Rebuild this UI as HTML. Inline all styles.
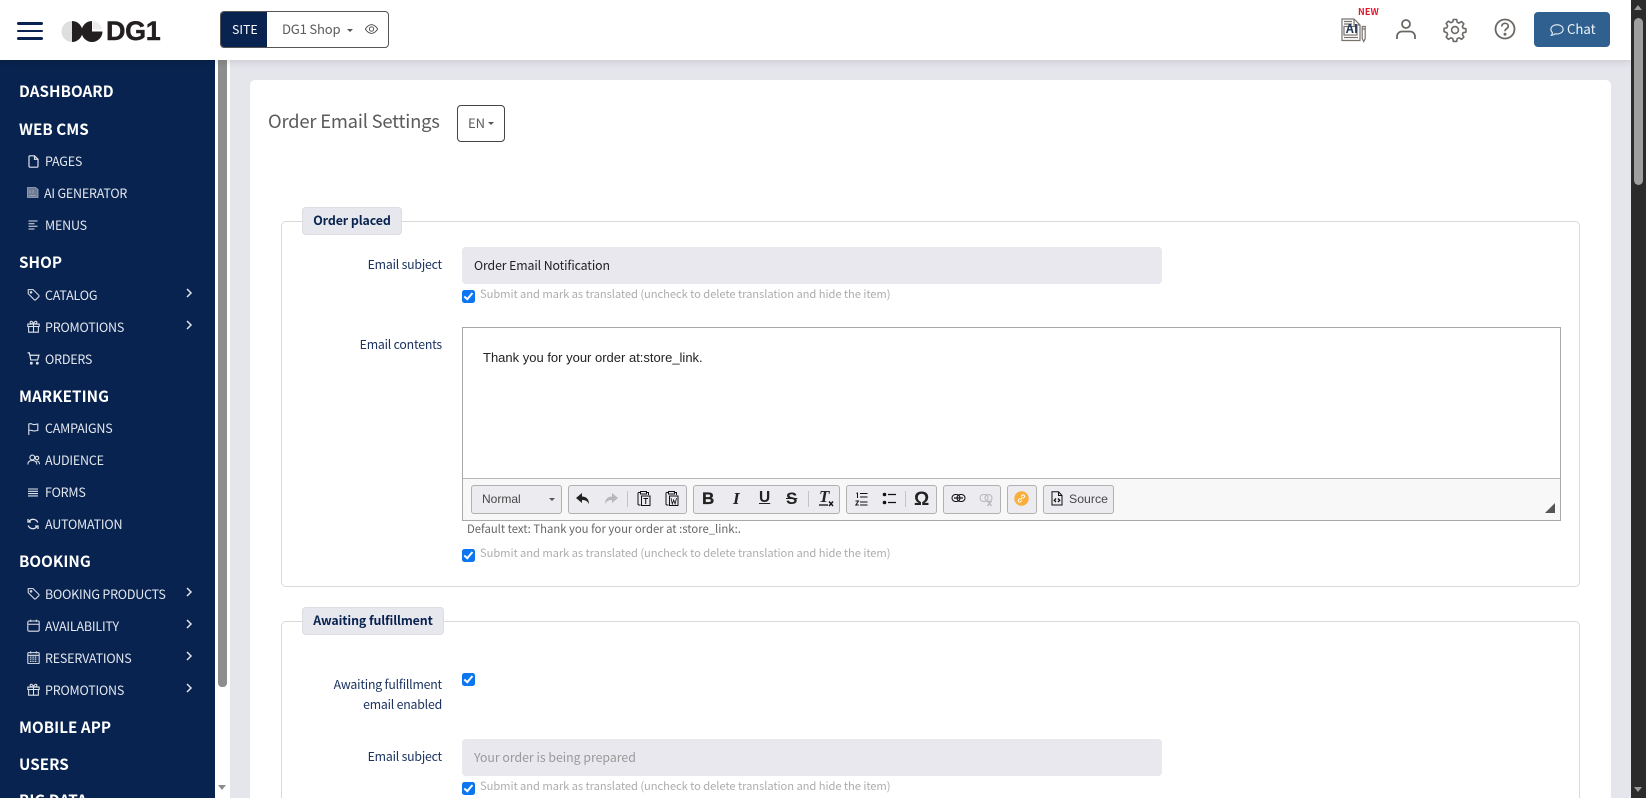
<!DOCTYPE html>
<html lang="en"><head><meta charset="utf-8"><title>Order Email Settings</title>
<style>
html,body{margin:0;padding:0;width:1646px;height:798px;overflow:hidden;background:#e5e5ec}
body{position:relative;font-family:"Noto Sans CJK JP","Liberation Sans",sans-serif}
.a{position:absolute}
.t{position:absolute;white-space:nowrap;line-height:20px;height:20px}
svg{position:absolute;overflow:visible;fill:none;stroke:currentColor}
#hdr{left:0;top:0;width:1631px;height:60px;background:#fff;box-shadow:0 2px 7px rgba(0,0,0,.12);z-index:3}
#side{left:0;top:0;width:215px;height:798px;color:#fff;z-index:2}
#strack{left:215px;top:60px;width:15px;height:738px;background:#fff;z-index:2}
#card{left:250px;top:80px;width:1361px;height:730px;background:#fff;border-radius:5px}
.h{left:19px;font-size:15.2px;font-weight:700;color:#fff;letter-spacing:.05px}
.s{left:45px;font-size:12.5px;color:#e4e8ef;letter-spacing:-.2px}
.i{color:#dfe4ec;stroke-width:1.3}
.fs{left:281px;width:1297px;border:1px solid #d9d9d9;border-radius:5px;box-sizing:content-box}
.lg{background:#e7e7ee;border:1px solid #dcdce3;border-radius:4px;height:26px;line-height:25px;font-size:12.4px;font-weight:700;color:#08234f;text-align:center;box-sizing:content-box;letter-spacing:-.1px}
.lb{font-size:12.3px;color:#1c3360;text-align:right;right:1204px;letter-spacing:-.2px}
.inp{left:462px;width:700px;height:37px;background:#e8e8ee;border-radius:4px}
.cb{left:462px;width:13px;height:13px;background:#0b76ef;border-radius:2.5px}
.cb:after{content:"";position:absolute;left:4.4px;top:1.4px;width:3px;height:6.8px;border:solid #fff;border-width:0 2px 2px 0;transform:rotate(40deg)}
.sm{left:480px;font-size:11.2px;color:#adadad;letter-spacing:-.07px}
.g{top:485px;height:27px;background:#ebebf0;border:1px solid #b1b1b1;border-radius:3px}
.ck{font-family:"Liberation Sans",sans-serif}
.sep{top:491px;width:1px;height:16px;background:#c4c4c4}
.tb{color:#111;stroke-width:1}
</style></head><body>
<svg width="0" height="0" style="position:absolute"><defs>
<symbol id="tag" viewBox="0 0 16 16"><path d="M1.500 2h6l7 7a1.200 1.200 0 0 1 0 1.700l-3.800 3.800a1.200 1.200 0 0 1-1.700 0l-7.500-7.500V2.500z"/><circle cx="5" cy="5.400" r=".9"/></symbol>
<symbol id="gift" viewBox="0 0 16 16"><path d="M1 5h14v3H1zM2 8v7h12V8M8 5v10M8 5C6 5 3.800 4.400 3.800 2.800S6.800 .5 8 5c1.200-4.500 4.200-3.800 4.200-2.200S10 5 8 5z"/></symbol>
<symbol id="cal" viewBox="0 0 16 16"><rect x="1" y="2.500" width="14" height="12.500" rx="1.500"/><path d="M1 6.500h14M4.500 .8V3.500M11.500 .8V3.500"/></symbol>
<symbol id="calw" viewBox="0 0 16 16"><rect x="1" y="2" width="14" height="13.500" rx="1"/><path d="M1 5.300h14M4.500 .5V3M11.500 .5V3"/><path d="M3.500 7.500h9M3.500 10h9M3.500 12.800h9" stroke-width="1.600" stroke-dasharray="1.300 .8"/></symbol>
<symbol id="chev" viewBox="0 0 8 12"><path d="M2 2l4 4-4 4" stroke-width="1.500"/></symbol>
</defs></svg>

<div id="hdr" class="a">
 <div class="a" style="left:17px;top:22px;width:26px;height:2.500px;background:#08234f;border-radius:2px"></div>
 <div class="a" style="left:17px;top:29.500px;width:26px;height:2.500px;background:#08234f;border-radius:2px"></div>
 <div class="a" style="left:17px;top:37px;width:26px;height:2.500px;background:#08234f;border-radius:2px"></div>
 <svg style="left:61px;top:21px;stroke:none" width="44" height="21" viewBox="0 0 44 21"><path d="M11 0A10.500 10.500 0 0 0 11 21z" fill="#dedede"/><path d="M11 0A10.500 10.500 0 0 1 11 21z" fill="#231f20"/><path d="M31 0A10.500 10.500 0 0 0 31 21 10.500 10.500 0 0 0 41.500 10.500H31z" fill="#231f20"/><path d="M31.500 0a10 10 0 0 1 9.500 8.500h-9.500z" fill="#ececec"/></svg>
 <div class="t ck" style="left:106px;top:18px;height:28px;line-height:27px;font-size:27px;font-weight:700;color:#231f20;letter-spacing:-.4px;-webkit-text-stroke:.4px #231f20">DG1</div>
 <div class="a" style="left:220px;top:11px;width:167px;height:35px;border:1px solid #555;border-radius:4px;background:#fff;overflow:hidden"><div class="a" style="left:0;top:0;width:46px;height:35px;background:#08234f"></div></div>
 <div class="t" style="left:232px;top:19px;font-size:12.400px;color:#fff">SITE</div>
 <div class="t" style="left:282px;top:19px;font-size:13.100px;color:#5c5c5c;letter-spacing:-.2px">DG1 Shop</div>
 <div class="a" style="left:347px;top:29px;border:3.500px solid transparent;border-top-color:#555;border-bottom:0"></div>
 <svg style="left:364px;top:22px;color:#444" width="15" height="14" viewBox="0 0 16 16"><path d="M1 8s2.700-5 7-5 7 5 7 5-2.700 5-7 5-7-5-7-5z"/><circle cx="8" cy="8" r="2.500"/></svg>
 <svg style="left:1341px;top:18px;color:#77716c" width="25" height="24" viewBox="0 0 25 24" stroke-width="1.200"><path d="M1 1h12l6 6v15.500H1zM13 1v6h6"/><path d="M3 3.500h8M3 6h8"/><rect x="3" y="8.500" width="13" height="8.500"/><path d="M21.200 8.500h3v12l-1.500 3-1.500-3zM21.200 11h3"/><path d="M3 19.500h14"/></svg>
 <div class="t" style="left:1346px;top:19px;font-size:12px;font-weight:700;color:#24385a;letter-spacing:.3px">AI</div>
 <div class="t" style="left:1358px;top:2px;font-size:9px;font-weight:700;color:#e3182d;letter-spacing:.1px">NEW</div>
 <svg style="left:1395px;top:18px;color:#6b6763" width="22" height="22" viewBox="0 0 22 22" stroke-width="1.800"><circle cx="11" cy="6" r="4"/><path d="M2 21v-2.500c0-3 2.500-5 5-5h8c2.500 0 5 2 5 5V21"/></svg>
 <svg style="left:1443px;top:18px;color:#6b6763" width="24" height="24" viewBox="0 0 16 16" stroke-width="1.050"><circle cx="8" cy="8" r="2.300"/><path d="M6.900 1h2.200l.4 1.900 1.200.5 1.700-1 1.500 1.500-1 1.700.5 1.200 1.900.4v2.200l-1.900.4-.5 1.200 1 1.700-1.500 1.500-1.700-1-1.200.5-.4 1.900H6.900l-.4-1.900-1.200-.5-1.700 1-1.500-1.500 1-1.700-.5-1.200L.7 9.100V6.900l1.900-.4.500-1.200-1-1.700 1.500-1.500 1.700 1 1.200-.5z" stroke-linejoin="round"/></svg>
 <svg style="left:1494px;top:18px;color:#6b6763" width="22" height="22" viewBox="0 0 22 22" stroke-width="1.800"><circle cx="11" cy="11" r="9.500"/><path d="M7.800 8.500c0-2 1.500-3.200 3.300-3.200s3.200 1.200 3.200 2.900c0 2.300-3.300 2.400-3.300 5" stroke-width="1.700"/><circle cx="11" cy="16.300" r=".6" fill="currentColor"/></svg>
 <div class="a" style="left:1534px;top:12px;width:76px;height:35px;background:#30608f;border-radius:4px"></div>
 <svg style="left:1550px;top:23px;color:#e3ebf3" width="14" height="14" viewBox="0 0 16 16" stroke-width="1.300"><path d="M8 2c3.900 0 7 2.300 7 5.300s-3.100 5.300-7 5.300c-.800 0-1.500-.1-2.200-.3C4.800 13.300 3 14 1.500 14c.700-.8 1.200-1.800 1.300-2.900C1.700 10.100 1 8.800 1 7.300 1 4.300 4.100 2 8 2z"/></svg>
 <div class="t" style="left:1567px;top:19px;font-size:13.200px;color:#eef3f8">Chat</div>
</div>

<div id="side" class="a">
 <div class="a" style="left:0;top:60px;width:215px;height:738px;background:#08234f"></div>
 <div class="t h" style="top:81px">DASHBOARD</div>
 <div class="t h" style="top:119px">WEB CMS</div>
 <svg class="i" style="left:27px;top:155px" width="13" height="13" viewBox="0 0 13 13"><path d="M2.500 .8h5l3.500 3.500V11a1 1 0 0 1-1 1.200h-7a1 1 0 0 1-1-1.200V2a1 1 0 0 1 1-1.200zM7.500 .8v3.500H11" stroke-width="1.200"/></svg>
 <div class="t s" style="top:151px">PAGES</div>
 <svg class="i" style="left:27px;top:187px;color:#a3acbc;stroke-width:.8" width="12" height="11" viewBox="0 0 12 11"><path d="M.5.500h8l2.500 2V10.500H.5z" fill="#6e7b94"/><path d="M2 8.500h7M3 3v3.500M6 3v3.500"/></svg>
 <div class="t s" style="left:44px;top:183px">AI GENERATOR</div>
 <svg class="i" style="left:28px;top:220px;stroke-width:1" width="11" height="10" viewBox="0 0 11 10"><path d="M.5 1h9M.5 3.700h6M.500 6.300h9M.5 9h6"/></svg>
 <div class="t s" style="top:215px">MENUS</div>
 <div class="t h" style="top:252px">SHOP</div>
 <svg class="i" style="left:27px;top:288px" width="13" height="13"><use href="#tag"/></svg>
 <div class="t s" style="top:285px">CATALOG</div>
 <svg class="i" style="left:185px;top:287px" width="8" height="12"><use href="#chev"/></svg>
 <svg class="i" style="left:27px;top:320px" width="13" height="13"><use href="#gift"/></svg>
 <div class="t s" style="top:317px">PROMOTIONS</div>
 <svg class="i" style="left:185px;top:319px" width="8" height="12"><use href="#chev"/></svg>
 <svg class="i" style="left:27px;top:352px;stroke-width:1.100" width="13" height="13" viewBox="0 0 12 12"><path d="M.5.800h1.700l1.300 6.500h6.300L11 3H2.800"/><circle cx="4" cy="10.300" r=".8" fill="currentColor"/><circle cx="9.500" cy="10.300" r=".8" fill="currentColor"/></svg>
 <div class="t s" style="top:349px">ORDERS</div>
 <div class="t h" style="top:386px">MARKETING</div>
 <svg class="i" style="left:28px;top:423px" width="11" height="12" viewBox="0 0 11 12"><path d="M.8 12V1c3-1 3.500.6 5 .6 1.300 0 2.700-.6 4-.6v6.500c-1.300 0-2.700.5-4 .5-1.500 0-2-1.400-5-.5" stroke-width="1.100"/></svg>
 <div class="t s" style="top:418px">CAMPAIGNS</div>
 <svg class="i" style="left:27px;top:454px;stroke-width:1.100" width="13" height="12" viewBox="0 0 13 12"><circle cx="5.300" cy="3.500" r="2.400"/><circle cx="10" cy="4" r="1.700"/><path d="M.8 10.500c0-3 2-4 4.500-4s4.500 1 4.500 4M9.500 7c1.500 0 3 .9 3 3.300"/></svg>
 <div class="t s" style="top:450px">AUDIENCE</div>
 <svg class="i" style="left:28px;top:488px" width="11" height="9" viewBox="0 0 11 9"><path d="M0 1h10M0 3.300h10M0 5.600h10M0 7.900h10" stroke-width="1.100"/></svg>
 <div class="t s" style="top:482px">FORMS</div>
 <svg class="i" style="left:27px;top:518px" width="12" height="12" viewBox="0 0 12 12"><path d="M10.800 4.500A5 5 0 0 0 2 3.500M1.200 7.500A5 5 0 0 0 10 8.500" stroke-width="1.300"/><path d="M1 1v3h3M11 11V8H8" stroke-width="1.300"/></svg>
 <div class="t s" style="top:514px">AUTOMATION</div>
 <div class="t h" style="top:551px">BOOKING</div>
 <svg class="i" style="left:27px;top:587px" width="13" height="13"><use href="#tag"/></svg>
 <div class="t s" style="top:584px">BOOKING PRODUCTS</div>
 <svg class="i" style="left:185px;top:586px" width="8" height="12"><use href="#chev"/></svg>
 <svg class="i" style="left:27px;top:619px" width="13" height="13"><use href="#cal"/></svg>
 <div class="t s" style="top:616px">AVAILABILITY</div>
 <svg class="i" style="left:185px;top:618px" width="8" height="12"><use href="#chev"/></svg>
 <svg class="i" style="left:27px;top:651px" width="13" height="13"><use href="#calw"/></svg>
 <div class="t s" style="top:648px">RESERVATIONS</div>
 <svg class="i" style="left:185px;top:650px" width="8" height="12"><use href="#chev"/></svg>
 <svg class="i" style="left:27px;top:683px" width="13" height="13"><use href="#gift"/></svg>
 <div class="t s" style="top:680px">PROMOTIONS</div>
 <svg class="i" style="left:185px;top:682px" width="8" height="12"><use href="#chev"/></svg>
 <div class="t h" style="top:717px">MOBILE APP</div>
 <div class="t h" style="top:754px">USERS</div>
 <div class="t h" style="top:790px">BIG DATA</div>
</div>

<div id="strack" class="a">
 <div class="a" style="left:3px;top:0;width:9px;height:627px;background:#8d8d8d;border-radius:0 0 4px 4px"></div>
 <div class="a" style="left:3px;top:725px;border:4.500px solid transparent;border-top:5px solid #8d8d8d;border-bottom:0"></div>
</div>

<div class="a" style="left:1631px;top:0;width:15px;height:798px;background:#2b2b2b;z-index:4">
 <div class="a" style="left:3px;top:5px;border:4.500px solid transparent;border-bottom:5px solid #9a9a9a;border-top:0"></div>
 <div class="a" style="left:2.500px;top:18px;width:9.500px;height:167px;background:#9f9f9f;border-radius:5px"></div>
 <div class="a" style="left:3px;top:787px;border:4.500px solid transparent;border-top:5px solid #9a9a9a;border-bottom:0"></div>
</div>

<div id="card" class="a"></div>

<div class="t" style="left:268px;top:110px;font-size:18.400px;color:#5b5b5b;line-height:22px;height:22px;letter-spacing:-.2px">Order Email Settings</div>
<div class="a" style="left:457px;top:105px;width:46px;height:35px;border:1px solid #444;border-radius:4px"></div>
<div class="t" style="left:468px;top:113px;font-size:13px;color:#5b5b5b">EN</div>
<div class="a" style="left:488px;top:122px;border:3.500px solid transparent;border-top-color:#555;border-bottom:0"></div>

<div class="a fs" style="top:221px;height:364px"></div>
<div class="a lg" style="left:302px;top:207px;width:98px">Order placed</div>
<div class="t lb" style="top:254px">Email subject</div>
<div class="a inp" style="top:247px"></div>
<div class="t" style="left:474px;top:255px;font-size:12.300px;color:#222;letter-spacing:-.1px">Order Email Notification</div>
<div class="a cb" style="top:290px"></div>
<div class="t sm" style="top:284px">Submit and mark as translated (uncheck to delete translation and hide the item)</div>
<div class="t lb" style="top:334px">Email contents</div>

<div class="a" style="left:462px;top:327px;width:1097px;height:192px;border:1px solid #a9a9a9;background:#fff"></div>
<div class="t ck" style="left:483px;top:348px;font-size:13px;color:#222">Thank you for your order at:store_link.</div>
<div class="a" style="left:463px;top:478px;width:1097px;height:42px;background:#f8f8f8;border-top:1px solid #b6b6b6;box-sizing:border-box"></div>

<div class="a g" style="left:471px;width:89px"></div>
<div class="t ck" style="left:482px;top:489px;font-size:12px;color:#484848">Normal</div>
<div class="a" style="left:549px;top:498px;border:3px solid transparent;border-top-color:#555;border-bottom:0"></div>
<div class="a g" style="left:568px;width:117px"></div>
<svg class="tb" style="left:575px;top:491px;stroke:none;fill:#222" width="16" height="15" viewBox="0 0 16 15"><path d="M7 2L1 7l6 5V9c3 0 5 .5 7 4 0-5-3-7.500-7-7.500z"/></svg>
<svg class="tb" style="left:603px;top:491px;stroke:none;fill:#b8b8b8" width="16" height="15" viewBox="0 0 16 15"><path d="M9 2l6 5-6 5V9c-3 0-5 .5-7 4 0-5 3-7.500 7-7.500z"/></svg>
<div class="a sep" style="left:627px"></div>
<svg class="tb" style="left:637px;top:490px" width="14" height="17" viewBox="0 0 14 17" stroke-width=".9"><path d="M3.500 2.500H1.500a1 1 0 0 0-.5 1v10.500a1 1 0 0 0 1 1h1.500M9.500 2.500h2V5M3.500 1.500h6V4h-6z"/><rect x="4.500" y="6" width="8.500" height="9.500"/><path d="M6.500 8.500h4.500M8.700 8.500V14"/></svg>
<svg class="tb" style="left:665px;top:490px" width="14" height="17" viewBox="0 0 14 17" stroke-width=".9"><path d="M3.500 2.500H1.500a1 1 0 0 0-.5 1v10.500a1 1 0 0 0 1 1h1.500M9.500 2.500h2V5M3.500 1.500h6V4h-6z"/><rect x="4.500" y="6" width="8.500" height="9.500"/><path d="M6 8l1.300 6 1.400-4 1.400 4L11.500 8" stroke-width=".8"/></svg>
<div class="a g" style="left:693px;width:145px"></div>
<div class="t ck" style="left:702px;top:489px;font-size:17px;font-weight:700;color:#222;-webkit-text-stroke:.3px #222">B</div>
<div class="t" style="left:733px;top:489px;font-family:'Liberation Serif',serif;font-size:17px;font-weight:700;font-style:italic;color:#222">I</div>
<div class="t ck" style="left:759px;top:488px;font-size:15.500px;font-weight:700;color:#222;text-decoration:underline">U</div>
<div class="t ck" style="left:786px;top:489px;font-size:17px;font-weight:700;color:#222;text-decoration:line-through">S</div>
<div class="a sep" style="left:808px"></div>
<div class="t" style="left:819px;top:487px;font-family:'Liberation Serif',serif;font-size:17px;font-weight:700;font-style:italic;color:#222">T</div>
<svg class="tb" style="left:818px;top:490px" width="16" height="17" viewBox="0 0 16 17"><path d="M1 15h9" stroke-width="1.300"/><path d="M11 11.500l4 4.500M15 11.500l-4 4.500" stroke-width="1.400"/></svg>
<div class="a g" style="left:846px;width:89px"></div>
<svg class="tb" style="left:855px;top:492px" width="13" height="14" viewBox="0 0 13 14"><path d="M5 1.500h7.500M5 5h7.500M5 10h7.500M5 13h7.500" stroke-width="1.100"/><path d="M1.500 1.500l1-.5v5M.5 9h3L.8 13h3" stroke-width="1"/></svg>
<svg class="tb" style="left:882px;top:492px" width="14" height="14" viewBox="0 0 14 14"><circle cx="2.500" cy="2.500" r="1.800" fill="#111" stroke="none"/><circle cx="2.500" cy="10.500" r="1.800" fill="#111" stroke="none"/><path d="M6 2.500h8M6 10.500h8" stroke-width="1.200"/></svg>
<div class="a sep" style="left:905px"></div>
<div class="t ck" style="left:914px;top:490px;font-size:19px;font-weight:700;color:#222">Ω</div>
<div class="a g" style="left:943px;width:56px"></div>
<svg class="tb" style="left:951px;top:493px" width="15" height="11" viewBox="0 0 15 11" stroke-width="1.500"><rect x="1" y="1.500" width="8" height="7" rx="3.500"/><rect x="6" y="1.500" width="8" height="7" rx="3.500"/><path d="M3 5h9" stroke-width="1.200"/></svg>
<svg class="tb" style="left:979px;top:493px;color:#b9b9b9" width="15" height="14" viewBox="0 0 15 14" stroke-width="1.300"><rect x="1" y="1.500" width="8" height="7" rx="3.500"/><rect x="6" y="1.500" width="7" height="7" rx="3.500"/><path d="M8.500 8l4 5M12.500 8l-4 5" stroke-width="1.400"/></svg>
<div class="a g" style="left:1007px;width:28px"></div>
<svg class="tb" style="left:1014px;top:491px;stroke:#fff" width="15" height="15" viewBox="0 0 15 15" stroke-width="1.200"><circle cx="7.500" cy="7.500" r="7.200" fill="#f9ae3b" stroke="none"/><path d="M6.500 8.500l2-2M5.800 7.500L4.600 8.700a1.400 1.400 0 0 0 2 2l1.200-1.200M9 7.500l1.200-1.200a1.400 1.400 0 0 0-2-2L7 5.500"/></svg>
<div class="a g" style="left:1043px;width:69px"></div>
<svg class="tb" style="left:1051px;top:491px" width="12" height="15" viewBox="0 0 12 15"><path d="M1 .8h6.500L11 4.500V14H1zM7.500 .8v3.700H11"/><path d="M5 7.500L3.300 9.300 5 11M7 7.500l1.700 1.800L7 11" stroke-width="1.300"/></svg>
<div class="t ck" style="left:1069px;top:489px;font-size:12.300px;color:#484848">Source</div>
<svg class="a" style="left:1545px;top:502px;stroke:none;fill:#555" width="11" height="12" viewBox="0 0 11 12"><path d="M10 1v10H0z"/></svg>

<div class="t" style="left:467px;top:519px;font-size:11.300px;color:#666">Default text: Thank you for your order at :store_link:.</div>
<div class="a cb" style="top:549px"></div>
<div class="t sm" style="top:543px">Submit and mark as translated (uncheck to delete translation and hide the item)</div>

<div class="a fs" style="top:621px;height:200px"></div>
<div class="a lg" style="left:302px;top:607px;width:140px">Awaiting fulfillment</div>
<div class="t lb" style="top:674px">Awaiting fulfillment</div>
<div class="t lb" style="top:694px">email enabled</div>
<div class="a cb" style="top:673px"></div>
<div class="t lb" style="top:746px">Email subject</div>
<div class="a inp" style="top:739px"></div>
<div class="t" style="left:474px;top:747px;font-size:12.300px;color:#9a9a9a">Your order is being prepared</div>
<div class="a cb" style="top:782px"></div>
<div class="t sm" style="top:776px">Submit and mark as translated (uncheck to delete translation and hide the item)</div>
</body></html>
